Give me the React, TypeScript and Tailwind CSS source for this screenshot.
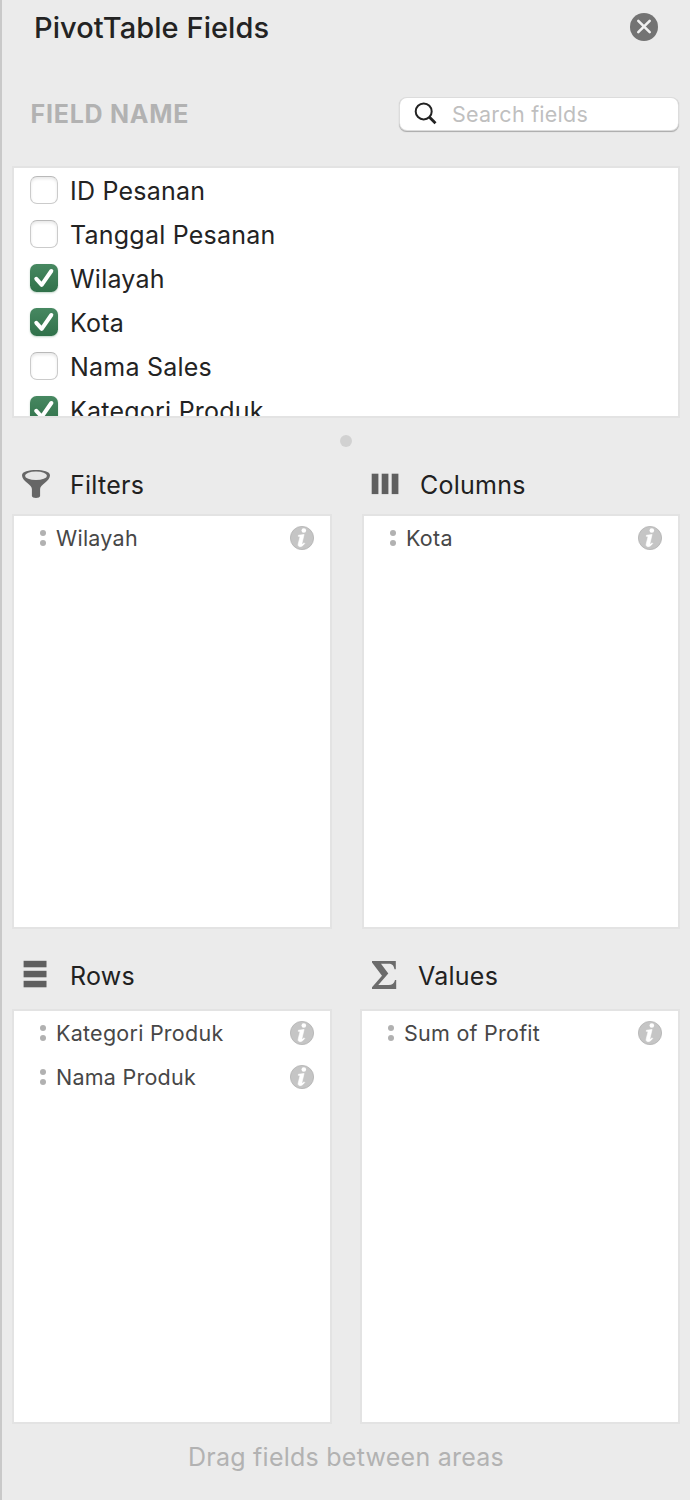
import type { ReactNode } from "react";

type Field = { name: string; checked: boolean };

const fields: Field[] = [
  { name: "ID Pesanan", checked: false },
  { name: "Tanggal Pesanan", checked: false },
  { name: "Wilayah", checked: true },
  { name: "Kota", checked: true },
  { name: "Nama Sales", checked: false },
  { name: "Kategori Produk", checked: true },
];

function CloseButton() {
  return (
    <button aria-label="Close" className="size-7">
      <svg viewBox="0 0 28 28" className="block size-7">
        <circle cx="14" cy="14" r="14" fill="#737373" />
        <path d="M8.3 7.8 19.7 19.2M19.7 7.8 8.3 19.2" stroke="#f0f0f0" strokeWidth="2.6" strokeLinecap="round" />
      </svg>
    </button>
  );
}

function SearchBox() {
  return (
    <div className="flex h-8 w-[278px] items-center rounded-[7px] bg-white pl-[14px] shadow-[0_0_0_1px_#dcdcdc,0_1px_1px_0.5px_#a9a9a9]">
      <svg viewBox="0 0 24 24" className="size-6 shrink-0" fill="none" stroke="#222222">
        <circle cx="9.7" cy="9.4" r="8" strokeWidth="2" />
        <path d="M15.3 15 21.5 21.2" strokeWidth="2.9" />
      </svg>
      <span className="ml-[14px] pt-px text-[21.5px] tracking-[0.25px] text-[#bfbfbf]">Search fields</span>
    </div>
  );
}

function CheckBox({ checked }: { checked: boolean }) {
  if (!checked) {
    return (
      <span className="size-7 shrink-0 rounded-[7px] border border-[#cbcbcb] border-t-[#b9b9b9] bg-white shadow-[inset_0_2px_3px_rgba(0,0,0,0.09)]" />
    );
  }
  return (
    <span className="size-7 shrink-0 rounded-[6.5px] bg-linear-to-b from-[#478861] to-[#30714a] shadow-[0_1px_2px_rgba(48,113,74,0.3)]">
      <svg viewBox="0 0 28 28" className="block size-7" fill="none">
        <path d="M6.3 14.8 11.7 20.8 21.3 7" stroke="#fff" strokeWidth="4" strokeLinecap="round" strokeLinejoin="round" />
      </svg>
    </span>
  );
}

function InfoIcon() {
  return (
    <svg viewBox="0 0 24 24" className="size-6 shrink-0">
      <circle cx="12" cy="12" r="11.6" fill="#c5c5c5" stroke="#b3b3b3" strokeWidth="0.8" />
      <circle cx="13.8" cy="4.5" r="2.3" fill="#fff" />
      <path d="M8.4 9.3 14.1 8.4 12 17.3C11.8 18.4 12.6 18.3 14.1 16.8L14.7 17.4C13 19.9 11.2 20.8 9.7 20.6 8.1 20.4 7.9 19.2 8.3 17.6L9.8 11.7C10 10.6 9.5 10.3 8.2 10.3Z" fill="#fff" stroke="#fff" strokeWidth="0.6" />
    </svg>
  );
}

function FunnelIcon() {
  return (
    <svg viewBox="0 0 30 30" className="size-[30px]">
      <path d="M1 6.2C1 9 3.2 11.3 6 13.7 9 16.2 10.9 17.8 10.9 20V27C10.9 29.6 19.1 29.6 19.1 27V20C19.1 17.8 21 16.2 24 13.7 26.8 11.3 29 9 29 6.2 29-.6 1-.6 1 6.2Z" fill="#666666" />
      <ellipse cx="15" cy="6.7" rx="11" ry="4.3" fill="#e6e6e6" />
    </svg>
  );
}

function ColumnsIcon() {
  return (
    <svg viewBox="0 0 30 30" className="size-[30px]" fill="#5f5f5f">
      <rect x="1.7" y="4.7" width="6.7" height="20.4" />
      <rect x="11.7" y="4.7" width="6.7" height="20.4" />
      <rect x="21.7" y="4.7" width="6.7" height="20.4" />
    </svg>
  );
}

function RowsIcon() {
  return (
    <svg viewBox="0 0 30 30" className="size-[30px]" fill="#5f5f5f">
      <rect x="2.6" y="0.8" width="22.9" height="6.5" />
      <rect x="2.6" y="10.8" width="22.9" height="6.5" />
      <rect x="2.6" y="20.8" width="22.9" height="6.5" />
    </svg>
  );
}

function SigmaIcon() {
  return (
    <svg viewBox="0 0 30 30" className="size-[30px]">
      <path d="M2 0.9H25.8V9.2H24.5C23.8 5.4 22 3.7 18.6 3.7H11L18.3 13.6 8.3 25H18.6C22.3 25 24.2 23.4 25 19.9H26.2V29H2V27.2L12 15.8 2 2.4Z" fill="#6b6b6b" />
    </svg>
  );
}

function Area({ icon, title, items, className, titleGap, headerClass }: {
  icon: ReactNode;
  title: string;
  items: string[];
  className: string;
  titleGap: string;
  headerClass: string;
}) {
  return (
    <section className={className}>
      <h2 className={`flex items-center ${headerClass}`}>
        {icon}
        <span className={`text-[25px] leading-8 tracking-[0.25px] text-[#212121] ${titleGap}`}>{title}</span>
      </h2>
      <ul className="h-[415px] border-2 border-[#e3e3e3] bg-white">
        {items.map((item) => (
          <li key={item} className="flex h-11 items-center pr-4 pl-[26px]">
            <span className="flex w-1.5 shrink-0 flex-col gap-1">
              <span className="size-1.5 rounded-full bg-[#b1b1b1]" />
              <span className="size-1.5 rounded-full bg-[#b1b1b1]" />
            </span>
            <span className="ml-[10px] flex-1 text-[21.5px] tracking-[0.25px] text-[#474747]">{item}</span>
            <InfoIcon />
          </li>
        ))}
      </ul>
    </section>
  );
}

export default function App() {
  return (
    <main className="flex h-[1500px] w-[690px] flex-col overflow-hidden border-l-2 border-[#c9c9c9] bg-[#ebebeb] pr-[10px] pl-[10px] font-['Inter','Liberation_Sans',sans-serif]">
      <header className="flex h-[54px] items-center justify-between pr-[22px] pl-[22px]">
        <h1 className="pt-[2px] text-[29px] leading-9 font-medium tracking-[0.07px] text-[#232323]">PivotTable Fields</h1>
        <CloseButton />
      </header>

      <div className="mt-[43px] flex h-[34px] items-center justify-between pr-[2px] pl-[18.5px]">
        <span className="text-[25px] leading-8 font-bold tracking-[0.75px] text-[#b2b2b2]">FIELD NAME</span>
        <SearchBox />
      </div>

      <ul className="mt-[35px] h-[252px] shrink-0 overflow-hidden border-2 border-[#e3e3e3] bg-white">
        {fields.map((field) => (
          <li key={field.name} className="flex h-11 items-center pl-4">
            <CheckBox checked={field.checked} />
            <span className="ml-3 pt-px text-[25px] leading-8 tracking-[0.23px] text-[#232323]">{field.name}</span>
          </li>
        ))}
      </ul>

      <div className="mt-[17px] flex h-3 shrink-0 justify-center">
        <span className="size-3 rounded-full bg-[#d1d1d1]" />
      </div>

      <div className="flex shrink-0 justify-between">
        <Area
          className="w-80"
          headerClass="h-[67px] pt-[7px] pl-[9px]"
          icon={<FunnelIcon />}
          title="Filters"
          titleGap="ml-[19px] pt-px"
          items={["Wilayah"]}
        />
        <Area
          className="w-[318px]"
          headerClass="h-[67px] pt-[7px] pl-[8px]"
          icon={<ColumnsIcon />}
          title="Columns"
          titleGap="ml-[20px] pt-px"
          items={["Kota"]}
        />
      </div>

      <div className="flex shrink-0 justify-between">
        <Area
          className="w-80"
          headerClass="h-20 pt-[12px] pl-[9px]"
          icon={<RowsIcon />}
          title="Rows"
          titleGap="ml-[19px] pt-[2px]"
          items={["Kategori Produk", "Nama Produk"]}
        />
        <Area
          className="w-80"
          headerClass="h-20 pt-[12px] pl-[10px]"
          icon={<SigmaIcon />}
          title="Values"
          titleGap="ml-[18px] pt-[2px]"
          items={["Sum of Profit"]}
        />
      </div>

      <p className="mt-[17px] text-center text-[25px] leading-8 tracking-[0.25px] text-[#b2b2b2]">Drag fields between areas</p>
    </main>
  );
}
